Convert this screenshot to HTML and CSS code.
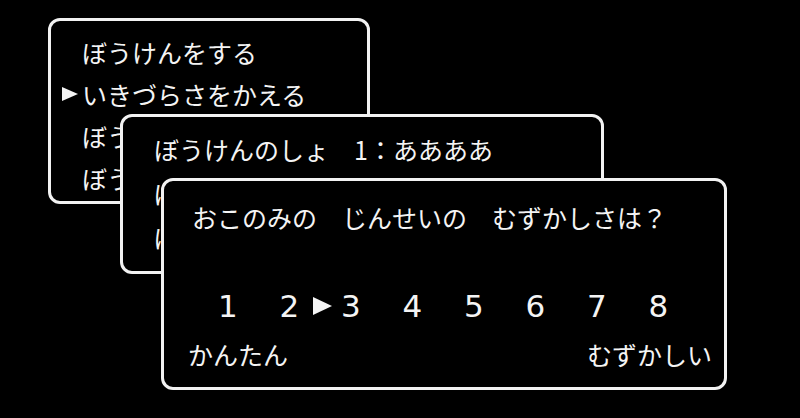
FILE: index.html
```html
<!DOCTYPE html>
<html>
<head>
  <meta charset="utf-8">
  <title>ぼうけんのしょ</title>
  <link rel="stylesheet" href="styles.css">
</head>
<body>
  <div class="screen">

    <div class="window menu">
      <ul class="choices">
        <li><span class="cursor"></span>ぼうけんをする</li>
        <li class="active"><span class="cursor"></span>いきづらさをかえる</li>
        <li><span class="cursor"></span>ぼうけんのしょをつくる</li>
        <li><span class="cursor"></span>ぼうけんのしょをけす</li>
      </ul>
    </div>

    <div class="window saves">
      <ul class="choices">
        <li><span class="cursor"></span>ぼうけんのしょ　1：ああああ</li>
        <li><span class="cursor"></span>ぼうけんのしょ　2：</li>
        <li><span class="cursor"></span>ぼうけんのしょ　3：</li>
      </ul>
    </div>

    <div class="window difficulty">
      <p class="prompt">おこのみの　じんせいの　むずかしさは？</p>
      <ol class="levels">
        <li>1</li>
        <li>2</li>
        <li class="current">3</li>
        <li>4</li>
        <li>5</li>
        <li>6</li>
        <li>7</li>
        <li>8</li>
      </ol>
      <div class="scale">
        <span>かんたん</span>
        <span>むずかしい</span>
      </div>
    </div>

  </div>
</body>
</html>
```

FILE: styles.css
```css
body {
  margin: 0;
  padding: 0;
  background-color: #000;
  color: #f4f4f4;
  font-family: "Noto Sans CJK JP", "Noto Sans", sans-serif;
  font-size: 25px;
}

.screen {
  position: relative;
  width: 800px;
  height: 418px;
  overflow: hidden;
}

/* each window sits on the screen at its own spot and covers the ones behind */
.window {
  position: absolute;
  box-sizing: border-box;
  background-color: #000;
  border: 3px solid #f2f2f2;
  border-radius: 12px;
}

.menu {
  left: 48px;
  top: 18px;
  width: 322px;
  height: 186px;
  padding: 10px 0 0 7px;
}

.saves {
  left: 120px;
  top: 114px;
  width: 484px;
  height: 160px;
  padding: 10px 0 0 7px;
}

.difficulty {
  left: 161px;
  top: 178px;
  width: 566px;
  height: 212px;
  padding: 20px 12px 17px 24px;
}

.choices {
  list-style-type: none;
  margin: 0;
  padding: 0;
  white-space: nowrap;
}

.choices li {
  display: flex;
  align-items: center;
  height: 42px;
}

.saves .choices li {
  height: 44px;
}

.cursor {
  flex: 0 0 24px;
  height: 14px;
}

.active .cursor::before {
  content: "";
  display: block;
  margin-left: 4px;
  width: 0;
  height: 0;
  border-left: 16px solid #f4f4f4;
  border-top: 7px solid transparent;
  border-bottom: 7px solid transparent;
}

.prompt {
  margin: 0 0 0 4px;
  line-height: 32px;
  white-space: nowrap;
}

.levels {
  list-style-type: none;
  display: flex;
  margin: 55px 0 0 9px;
  padding: 0;
  font-family: "DejaVu Sans", sans-serif;
  font-size: 31px;
  line-height: 36px;
}

.levels li {
  position: relative;
  width: 61.5px;
  text-align: center;
}

.levels .current::before {
  content: "";
  position: absolute;
  left: -7px;
  top: 50%;
  transform: translateY(-50%);
  border-left: 19px solid #f4f4f4;
  border-top: 9px solid transparent;
  border-bottom: 9px solid transparent;
}

.scale {
  display: flex;
  justify-content: space-between;
  margin-top: 14px;
  line-height: 32px;
}
```
